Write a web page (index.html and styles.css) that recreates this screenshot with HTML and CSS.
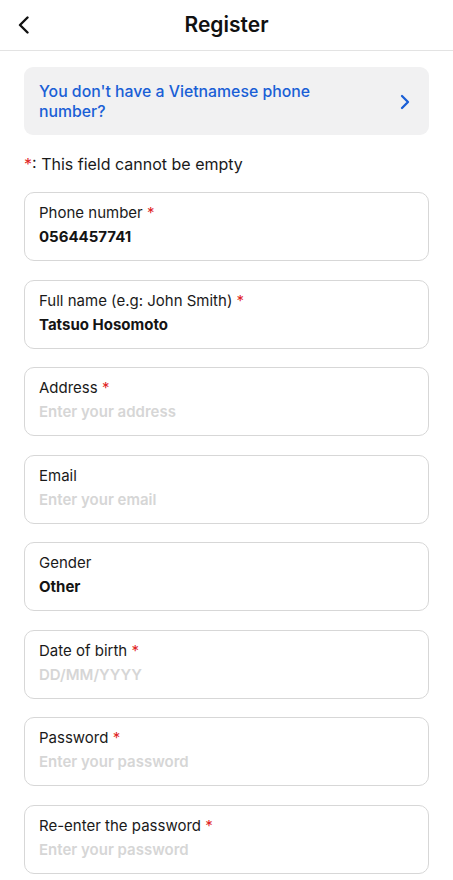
FILE: index.html
```html
<!DOCTYPE html>
<html>
<head>
<meta charset="utf-8">
<link rel="stylesheet" href="styles.css">
</head>
<body>
<header class="topbar">
  <button class="back" aria-label="Back">
    <svg width="14" height="18" viewBox="0 0 14 18"><path d="M10.5 1.5 L3 9 L10.5 16.5" fill="none" stroke="#111" stroke-width="2.4" stroke-linecap="round" stroke-linejoin="round"/></svg>
  </button>
  <h1 class="title">Register</h1>
</header>
<main class="content">
  <a class="notice">
    <span class="notice-text">You don't have a Vietnamese phone number?</span>
    <svg class="notice-chev" width="12" height="16" viewBox="0 0 12 16"><path d="M3 2 L9 8 L3 14" fill="none" stroke="#1a5fd6" stroke-width="2.3" stroke-linecap="round" stroke-linejoin="round"/></svg>
  </a>
  <p class="hint"><span class="req">*</span>: This field cannot be empty</p>
  <div class="fields">
    <div class="field"><div class="label">Phone number <span class="req">*</span></div><div class="value">0564457741</div></div>
    <div class="field"><div class="label">Full name (e.g: John Smith) <span class="req">*</span></div><div class="value">Tatsuo Hosomoto</div></div>
    <div class="field"><div class="label">Address <span class="req">*</span></div><div class="value placeholder">Enter your address</div></div>
    <div class="field"><div class="label">Email</div><div class="value placeholder">Enter your email</div></div>
    <div class="field"><div class="label">Gender</div><div class="value">Other</div></div>
    <div class="field"><div class="label">Date of birth <span class="req">*</span></div><div class="value placeholder">DD/MM/YYYY</div></div>
    <div class="field"><div class="label">Password <span class="req">*</span></div><div class="value placeholder">Enter your password</div></div>
    <div class="field"><div class="label">Re-enter the password <span class="req">*</span></div><div class="value placeholder">Enter your password</div></div>
  </div>
</main>
</body>
</html>
```
FILE: styles.css
```css
* { box-sizing: border-box; }
html, body { margin: 0; padding: 0; background: #fff; }
body {
  font-family: Inter, "Noto Sans", "Liberation Sans", sans-serif;
  color: #1a1a1a;
  width: 453px;
  height: 880px;
  overflow: hidden;
}
.topbar {
  position: relative;
  height: 51px;
  border-bottom: 1.5px solid #e3e3e3;
  display: flex;
  align-items: center;
  justify-content: center;
}
.back {
  position: absolute;
  left: 17px;
  top: 16px;
  border: 0;
  background: none;
  padding: 0;
  width: 16px;
  height: 18px;
  display: flex;
  align-items: center;
}
.title {
  margin: 0;
  font-size: 21px;
  font-weight: 600;
  color: #111;
  line-height: 26px;
}
.content {
  padding: 16px 24px 0 24px;
}
.notice {
  display: flex;
  align-items: center;
  justify-content: space-between;
  background: #f1f1f2;
  border-radius: 9px;
  height: 68px;
  padding: 1px 18px 0 15px;
}
.notice-text {
  color: #1a5fd6;
  font-size: 15.8px;
  font-weight: 500;
  line-height: 20px;
  max-width: 300px;
}
.notice-chev { flex: none; }
.hint {
  margin: 17px 0 0 0;
  font-size: 16px;
  line-height: 24px;
  color: #1a1a1a;
}
.req { color: #e02424; }
.fields {
  margin-top: 16px;
  display: flex;
  flex-direction: column;
  gap: 18.5px;
}
.field {
  height: 69px;
  border: 1px solid #d7d7d7;
  border-radius: 10px;
  padding: 8px 14px 0 14px;
}
.label {
  font-size: 15px;
  line-height: 24px;
  color: #1a1a1a;
}
.value {
  font-size: 15px;
  line-height: 24px;
  font-weight: 700;
  color: #141414;
}
.value.placeholder {
  color: #d6d6d6;
  font-weight: 600;
}
```
